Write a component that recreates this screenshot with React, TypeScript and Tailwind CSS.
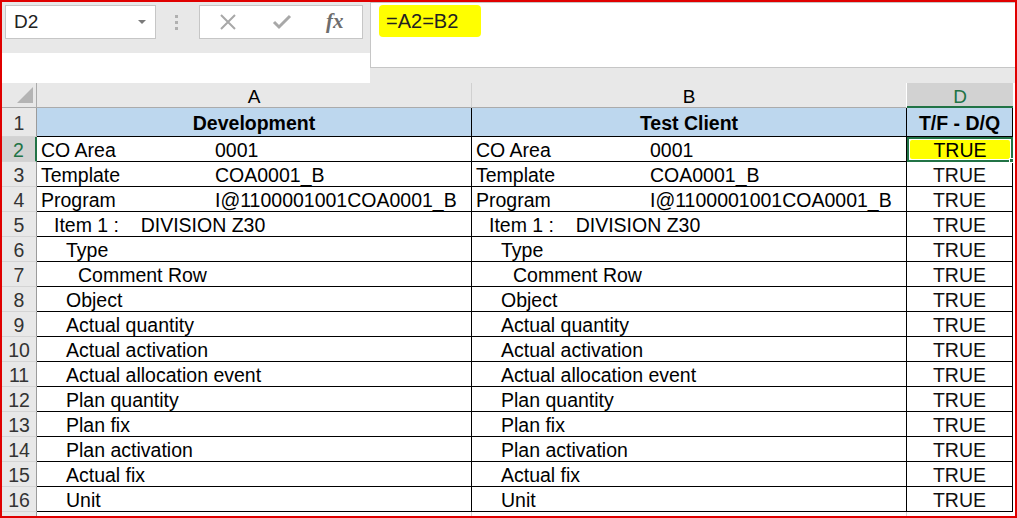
import { Fragment } from "react";

type Indent = "none" | "item" | "sub" | "deep";

type Row = {
  n: number;
  label: string;
  value?: string;
  indent: Indent;
};

const ROWS: Row[] = [
  { n: 2, label: "CO Area", value: "0001", indent: "none" },
  { n: 3, label: "Template", value: "COA0001_B", indent: "none" },
  { n: 4, label: "Program", value: "I@1100001001COA0001_B", indent: "none" },
  { n: 5, label: "Item 1 :    DIVISION Z30", indent: "item" },
  { n: 6, label: "Type", indent: "sub" },
  { n: 7, label: "Comment Row", indent: "deep" },
  { n: 8, label: "Object", indent: "sub" },
  { n: 9, label: "Actual quantity", indent: "sub" },
  { n: 10, label: "Actual activation", indent: "sub" },
  { n: 11, label: "Actual allocation event", indent: "sub" },
  { n: 12, label: "Plan quantity", indent: "sub" },
  { n: 13, label: "Plan fix", indent: "sub" },
  { n: 14, label: "Plan activation", indent: "sub" },
  { n: 15, label: "Actual fix", indent: "sub" },
  { n: 16, label: "Unit", indent: "sub" },
];

const INDENT: Record<Indent, string> = {
  none: "pl-[4px]",
  item: "pl-[17px]",
  sub: "pl-[29px]",
  deep: "pl-[41px]",
};

function TextCell({ row }: { row: Row }) {
  return (
    <div
      className={`flex h-[25px] items-center overflow-hidden whitespace-pre border-r border-b border-black pt-[3px] leading-none ${INDENT[row.indent]}`}
    >
      {row.value ? (
        <>
          <span className="w-[174px] shrink-0">{row.label}</span>
          <span>{row.value}</span>
        </>
      ) : (
        <span>{row.label}</span>
      )}
    </div>
  );
}

function Toolbar() {
  return (
    <div className="flex h-[81px]">
      <div className="flex w-[368px] flex-col">
        <div className="flex h-[51px] items-start bg-[#e8e8e8] pt-[3px] pl-[3px]">
          <div className="flex h-[34px] w-[151px] items-center justify-between border border-[#c6c6c6] bg-white pr-[9px] pl-[8px]">
            <span className="pt-[1px] text-[19px] text-[#222]">D2</span>
            <svg width="8" height="5" viewBox="0 0 8 5">
              <path d="M0 0 L8 0 L4 4 Z" fill="#7a7a7a" />
            </svg>
          </div>
          <div className="ml-[19px] flex h-[34px] flex-col items-center justify-center gap-[3px]">
            <span className="block size-[3px] bg-[#b0b0b0]" />
            <span className="block size-[3px] bg-[#b0b0b0]" />
            <span className="block size-[3px] bg-[#b0b0b0]" />
          </div>
          <div className="ml-[21px] flex h-[34px] w-[164px] items-center border border-[#c6c6c6] bg-white">
            <svg className="ml-[19px]" width="18" height="18" viewBox="0 0 18 18">
              <path d="M2 2 L16 16 M16 2 L2 16" stroke="#a8a8a8" strokeWidth="2" />
            </svg>
            <svg className="ml-[35px]" width="20" height="18" viewBox="0 0 20 18">
              <path d="M2 9 L7 14 L18 3" stroke="#a8a8a8" strokeWidth="3" fill="none" />
            </svg>
            <span className="ml-[34px] font-['Liberation_Serif',serif] text-[21px] font-bold text-[#6d6d6d] italic">
              fx
            </span>
          </div>
        </div>
        <div className="h-[30px] bg-white" />
      </div>
      <div className="flex flex-1 flex-col">
        <div className="h-[65px] border-t border-l border-[#c6c6c6] bg-white pt-[2px] pl-[8px]">
          <div className="inline-block h-[32px] w-[102px] rounded-[4px] bg-[#ffff00] pt-[5px] pl-[7px] text-[20px] leading-[23px] text-[#222]">
            =A2=B2
          </div>
        </div>
        <div className="flex-1 border-t border-[#c6c6c6] bg-[#e8e8e8]" />
      </div>
    </div>
  );
}

export default function App() {
  return (
    <div className="h-[518px] w-[1017px] overflow-hidden border-2 border-[#e00000] bg-white font-['Liberation_Sans',Arial,sans-serif] text-[19.5px] text-black">
      <Toolbar />
      <div className="grid grid-cols-[35px_435px_435px_106px]">
        {/* column headers */}
        <div className="relative h-[25px] border-r border-b border-[#ababab] bg-[#e8e8e8]">
          <svg className="absolute right-[3px] bottom-[4px]" width="16" height="16" viewBox="0 0 16 16">
            <path d="M16 0 L16 16 L0 16 Z" fill="#b4b4b4" />
          </svg>
        </div>
        <div className="flex h-[25px] items-center justify-center border-r border-b border-r-[#d0d0d0] border-b-[#ababab] bg-[#e8e8e8] pt-[3px] text-[19px] leading-none">
          A
        </div>
        <div className="flex h-[25px] items-center justify-center border-r border-b border-r-[#ffffff] border-b-[#ababab] bg-[#e8e8e8] pt-[3px] text-[19px] leading-none">
          B
        </div>
        <div className="flex h-[25px] items-center justify-center border-b-2 border-[#217346] bg-[#d2d2d2] pt-[3px] text-[19px] leading-none text-[#217346]">
          D
        </div>

        {/* row 1 */}
        <div className="flex h-[29px] items-center justify-center border-r border-b border-r-[#9b9b9b] border-b-[#d4d4d4] bg-[#e8e8e8] pt-[4px] leading-none text-[#333]">
          1
        </div>
        <div className="flex h-[29px] items-center justify-center border-r border-b border-black bg-[#bdd7ee] pt-[4px] leading-none font-bold">
          Development
        </div>
        <div className="flex h-[29px] items-center justify-center border-r border-b border-black bg-[#bdd7ee] pt-[4px] leading-none font-bold">
          Test Client
        </div>
        <div className="flex h-[29px] items-center justify-center border-r border-b border-black bg-[#bdd7ee] pt-[4px] leading-none font-bold">
          T/F - D/Q
        </div>

        {ROWS.map((row) => {
          const sel = row.n === 2;
          return (
            <Fragment key={row.n}>
              <div
                className={
                  sel
                    ? "flex h-[25px] items-center justify-center border-r-2 border-b border-r-[#217346] border-b-[#d4d4d4] bg-[#d2d2d2] pt-[3px] leading-none text-[#217346]"
                    : "flex h-[25px] items-center justify-center border-r border-b border-r-[#9b9b9b] border-b-[#d4d4d4] bg-[#e8e8e8] pt-[3px] leading-none text-[#333]"
                }
              >
                {row.n}
              </div>
              <TextCell row={row} />
              <TextCell row={row} />
              {sel ? (
                <div className="relative h-[25px] border-2 border-[#217346] p-[1px]">
                  <div className="flex h-full items-center justify-center rounded-[2px] bg-[#ffff00] pt-[3px] leading-none">
                    TRUE
                  </div>
                  <span className="absolute -right-[3px] -bottom-[3px] block size-[5px] border border-white bg-[#217346]" />
                </div>
              ) : (
                <div className="flex h-[25px] items-center justify-center border-r border-b border-black pt-[3px] leading-none text-[#111]">
                  TRUE
                </div>
              )}
            </Fragment>
          );
        })}

        <div className="h-[8px] border-r border-r-[#9b9b9b] bg-[#e8e8e8]" />
        <div className="h-[8px] border-r border-[#d4d4d4]" />
        <div className="h-[8px] border-r border-[#d4d4d4]" />
        <div className="h-[8px]" />
      </div>
    </div>
  );
}
